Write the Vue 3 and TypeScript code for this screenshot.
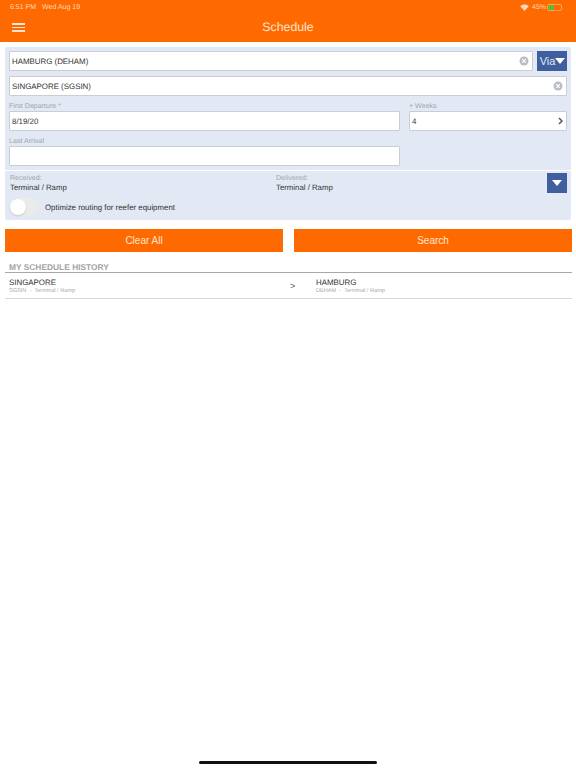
<script setup lang="ts">
const clearIcon = "M3.2 3.2 L6.8 6.8 M6.8 3.2 L3.2 6.8";
</script>

<template>
  <div class="page">
    <header class="header">
      <div class="status">
        <span class="time">6:51 PM</span>
        <span class="date">Wed Aug 19</span>
        <span class="spacer"></span>
        <svg class="wifi" width="9" height="7" viewBox="0 0 18 14">
          <path d="M9 14 L0.5 4.6 C5.5 0 12.5 0 17.5 4.6 Z" fill="#ffd9bd" />
        </svg>
        <span class="pct">45%</span>
        <span class="battery">
          <span class="battery-fill"></span>
        </span>
      </div>
      <div class="titlebar">
        <span class="burger"><i></i><i></i><i></i></span>
        <span class="title">Schedule</span>
      </div>
    </header>

    <section class="panel">
      <div class="row-via">
        <div class="input grow">
          <span>HAMBURG (DEHAM)</span>
          <svg class="clear" width="10" height="10" viewBox="0 0 10 10">
            <circle cx="5" cy="5" r="4.5" fill="#b9bdc4" />
            <path :d="clearIcon" stroke="#fff" stroke-width="1.1" />
          </svg>
        </div>
        <button class="via">
          Via<svg width="10" height="6" viewBox="0 0 10 6"><path d="M0 0H10L5 6Z" fill="#fff" /></svg>
        </button>
      </div>
      <div class="input second">
        <span>SINGAPORE (SGSIN)</span>
        <svg class="clear" width="10" height="10" viewBox="0 0 10 10">
          <circle cx="5" cy="5" r="4.5" fill="#b9bdc4" />
          <path :d="clearIcon" stroke="#fff" stroke-width="1.1" />
        </svg>
      </div>

      <div class="dates">
        <div class="col-left">
          <label class="label">First Departure *</label>
          <div class="input tall"><span>8/19/20</span></div>
          <label class="label arrival">Last Arrival</label>
          <div class="input tall"></div>
        </div>
        <div class="col-right">
          <label class="label">+ Weeks</label>
          <div class="input tall">
            <span>4</span>
            <svg class="chev" width="5" height="8" viewBox="0 0 5 8">
              <path d="M1 1 L4 4 L1 7" fill="none" stroke="#555" stroke-width="1.5" />
            </svg>
          </div>
        </div>
      </div>

      <div class="services">
        <div class="service received">
          <div class="label">Received:</div>
          <div class="value">Terminal / Ramp</div>
        </div>
        <div class="service delivered">
          <div class="label">Delivered:</div>
          <div class="value">Terminal / Ramp</div>
        </div>
        <button class="drop">
          <svg width="10" height="6" viewBox="0 0 10 6"><path d="M0 0H10L5 6Z" fill="#fff" /></svg>
        </button>
      </div>

      <div class="reefer">
        <span class="toggle"><span class="knob"></span></span>
        <span class="reefer-text">Optimize routing for reefer equipment</span>
      </div>
    </section>

    <div class="actions">
      <button class="action">Clear All</button>
      <button class="action">Search</button>
    </div>

    <section class="history">
      <h2 class="history-title">MY SCHEDULE HISTORY</h2>
      <div class="history-row">
        <div class="place from">
          <div class="city">SINGAPORE</div>
          <div class="sub">SGSIN &nbsp;-&nbsp; Terminal / Ramp</div>
        </div>
        <span class="arrow">&gt;</span>
        <div class="place">
          <div class="city">HAMBURG</div>
          <div class="sub">DEHAM &nbsp;-&nbsp; Terminal / Ramp</div>
        </div>
      </div>
    </section>

    <div class="home-wrap"><div class="home"></div></div>
  </div>
</template>

<style scoped>
.page {
  width: 576px;
  height: 768px;
  background: #fff;
  display: flex;
  flex-direction: column;
  font-family: "Liberation Sans", Arial, sans-serif;
  text-rendering: geometricPrecision;
  color: #333;
  overflow: hidden;
}
.header {
  height: 42px;
  background: #ff6a00;
  color: #fff;
  flex: none;
}
.status {
  height: 14px;
  display: flex;
  align-items: center;
  padding: 0 14px 0 10px;
  font-size: 7px;
  color: #ffd9bd;
}
.date { margin-left: 6px; }
.spacer { flex: 1; }
.pct { margin-left: 3px; }
.battery {
  width: 15px;
  height: 7px;
  margin-left: 1px;
  border: 1px solid rgba(255, 217, 189, 0.5);
  border-radius: 2px;
  box-sizing: border-box;
  display: block;
}
.battery-fill {
  display: block;
  width: 6px;
  height: 100%;
  background: #66b92e;
}
.titlebar {
  height: 26px;
  display: flex;
  align-items: center;
  justify-content: center;
  position: relative;
}
.burger {
  position: absolute;
  left: 12px;
  top: 9px;
  width: 13px;
  display: flex;
  flex-direction: column;
  gap: 2px;
}
.burger i {
  display: block;
  height: 1.5px;
  background: #ffe6d3;
}
.title {
  font-size: 12.3px;
  color: #ffe6d3;
}
.panel {
  margin: 5px 5px 0;
  width: 566px;
  height: 173px;
  box-sizing: border-box;
  background: #e2e8f4;
  padding: 4px 4px 0;
  border-radius: 2px;
  flex: none;
}
.row-via {
  display: flex;
  gap: 4px;
}
.input {
  height: 20px;
  box-sizing: border-box;
  background: #fff;
  border: 1px solid #c9ced6;
  border-radius: 1px;
  display: flex;
  align-items: center;
  justify-content: space-between;
  padding: 0 3px 0 2px;
  font-size: 7.9px;
  color: #333;
}
.grow { flex: 1; }
.second { margin-top: 5px; }
.clear { flex: none; }
.via {
  width: 30px;
  height: 20px;
  border: 0;
  padding: 0 0 0 1px;
  background: #3f5f9f;
  color: #e4e9f4;
  font: 11px "Liberation Sans", Arial, sans-serif;
  display: flex;
  align-items: center;
  justify-content: center;
}
.dates {
  display: flex;
  gap: 9px;
  margin-top: 5px;
}
.col-left { width: 391px; }
.col-right { flex: 1; }
.label {
  display: block;
  height: 9px;
  line-height: 11px;
  font-size: 7.1px;
  color: #a0a4ab;
}
.col-left .input, .col-right .input { margin-top: 1px; }
.tall { height: 20px; }
.arrival { margin-top: 5px; }
.services {
  position: relative;
  display: flex;
  margin: 4px -4px 0;
  padding: 2px 4px 0 5px;
  border-top: 1px solid #fff;
  height: 24px;
}
.service { width: 266px; }
.value {
  font-size: 7.8px;
  line-height: 11px;
  color: #333;
}
.drop {
  position: absolute;
  right: 4px;
  top: 2px;
  width: 20px;
  height: 20px;
  border: 0;
  padding: 0;
  background: #3f5f9f;
  display: flex;
  align-items: center;
  justify-content: center;
}
.reefer {
  display: flex;
  align-items: center;
  margin-top: 1px;
  padding-left: 1px;
  height: 18px;
}
.toggle {
  width: 28px;
  height: 18px;
  border-radius: 9px;
  background: #ebebeb;
  position: relative;
  display: block;
}
.knob {
  position: absolute;
  left: 0;
  top: 1px;
  width: 16px;
  height: 16px;
  border-radius: 50%;
  background: #fff;
  box-shadow: 0 1px 2px rgba(0, 0, 0, 0.15);
}
.reefer-text {
  margin-left: 7px;
  font-size: 7.85px;
  color: #333;
}
.actions {
  display: flex;
  justify-content: space-between;
  margin: 9px 4px 0 5px;
  flex: none;
}
.action {
  width: 278px;
  height: 23px;
  border: 0;
  padding: 0;
  background: #ff6a00;
  color: #ffe6d3;
  font: 10px "Liberation Sans", Arial, sans-serif;
}
.history {
  margin: 11px 4px 0 5px;
  flex: none;
}
.history-title {
  margin: 0;
  height: 9px;
  line-height: 9px;
  padding: 0 0 0 4px;
  font-size: 8.4px;
  font-weight: bold;
  color: #a3a3a3;
  border-bottom: 1px solid #a8a8a8;
  box-sizing: content-box;
}
.history-row {
  box-sizing: content-box;
  border-bottom: 1px solid #d8d8d8;
  display: flex;
  align-items: flex-start;
  padding-top: 5px;
  height: 20px;
}
.place { padding-left: 4px; }
.from { width: 281px; }
.city {
  font-size: 7.9px;
  line-height: 10px;
  color: #333;
}
.sub {
  font-size: 5.6px;
  line-height: 7px;
  color: #aaa;
}
.arrow {
  width: 22px;
  font-size: 9px;
  line-height: 17px;
  color: #555;
}
.home-wrap {
  margin-top: auto;
  display: flex;
  justify-content: center;
  padding-bottom: 4px;
}
.home {
  width: 178px;
  height: 3px;
  border-radius: 2px;
  background: #111;
}
</style>
